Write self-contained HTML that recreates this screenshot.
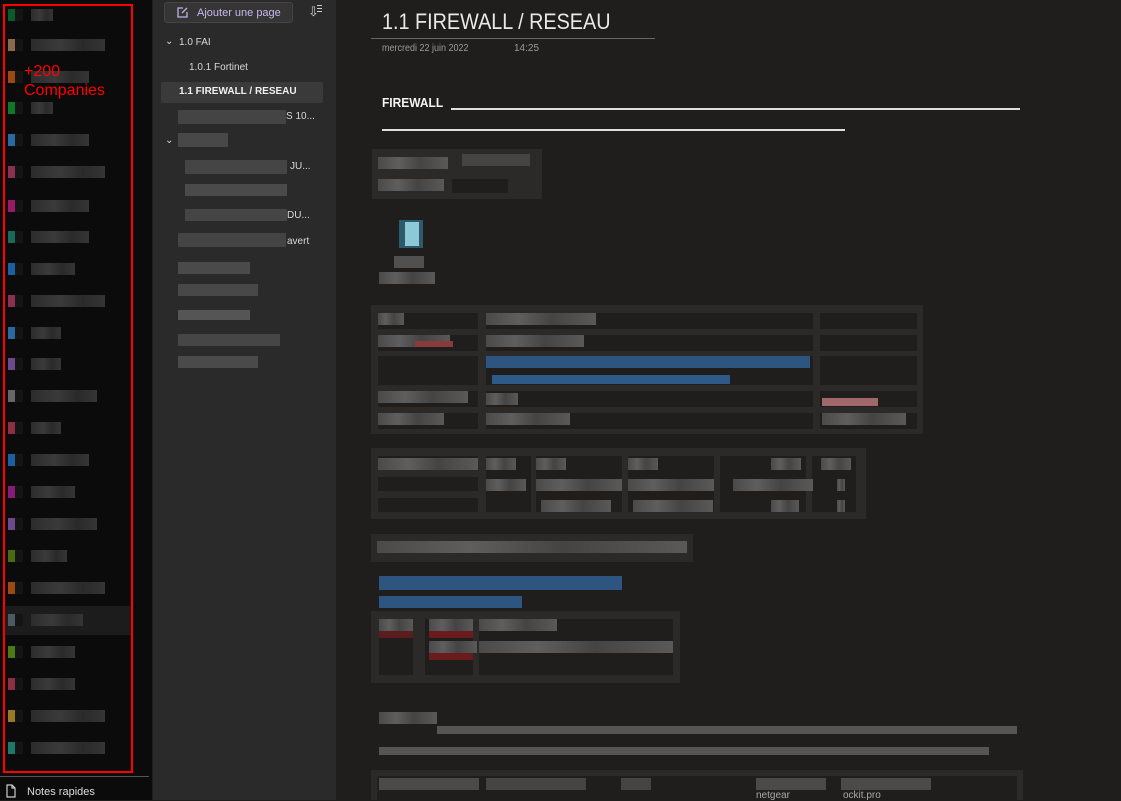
<!DOCTYPE html>
<html><head><meta charset="utf-8"><style>
*{margin:0;padding:0;box-sizing:border-box}
body{width:1121px;height:800px;overflow:hidden;background:#1f1e1d;font-family:"Liberation Sans",sans-serif;position:relative}
.a{position:absolute}
#left{left:0;top:0;width:152px;height:800px;background:#0b0b0b}
#mid{left:153px;top:0;width:183px;height:800px;background:#2a2a2a}
.sq{position:absolute;left:8px;width:7px;height:12px}
.sq2{position:absolute;left:15px;width:8px;height:12px;background:#141414}
.tb{position:absolute;left:31px;height:12px;background:linear-gradient(90deg,#2c2c2c,#3a3a3a 40%,#2a2a2a 70%,#353535)}
.g{position:absolute;background:#4a4a4a}
.mt{position:absolute;color:#d8d8d8;font-size:11px}
.tbl{position:absolute;background:#2b2a29}
.c{position:absolute;background:#1f1e1d}
.t{position:absolute;height:12px;background:linear-gradient(90deg,#4a4a4a,#5e5e5e 30%,#444 60%,#595959)}
</style></head><body>
<div id="left" class="a">
<div class="a" style="left:2px;top:606px;width:130px;height:29px;background:#1c1c1c"></div>
<div id="items"></div>
<div class="a" style="left:3px;top:4px;width:130px;height:769px;border:2px solid #f00"></div>
<div class="a" style="left:24px;top:62px;color:#f00;font-size:16px;line-height:19px">+200<br>Companies</div>
<div class="a" style="left:0;top:776px;width:149px;height:1px;background:#555"></div>
<svg class="a" style="left:4px;top:784px" width="14" height="14" viewBox="0 0 14 14"><path d="M3 1h5l3 3v9H3z M8 1v3h3" fill="none" stroke="#ccc" stroke-width="1.2"/></svg>
<div class="a" style="left:27px;top:786px;color:#ddd;font-size:11px">Notes rapides</div>
</div>
<div id="mid" class="a">
<div class="a" style="left:11px;top:2px;width:129px;height:21px;background:#353535;border:1px solid #444;border-radius:3px"></div>
<svg class="a" style="left:23px;top:6px" width="13" height="13" viewBox="0 0 13 13"><path d="M11 6v5H2V2h5 M6 7l5-5" fill="none" stroke="#c2b0e8" stroke-width="1.3"/></svg>
<div class="a" style="left:44px;top:7px;color:#c8b8ec;font-size:11px">Ajouter une page</div>
<div class="a" style="left:155px;top:4px;color:#ccc;font-size:13px">⇩</div>
<div class="a" style="left:164px;top:5px;width:5px;height:1px;background:#ccc;box-shadow:0 3px 0 #ccc,0 6px 0 #ccc"></div>
<div class="mt" style="left:12px;top:36px;font-size:10px">⌄</div>
<div class="mt" style="left:26px;top:37px;font-size:10px">1.0 FAI</div>
<div class="mt" style="left:36px;top:62px;font-size:10px">1.0.1 Fortinet</div>
<div class="a" style="left:8px;top:82px;width:162px;height:21px;background:#3a3a3a;border-radius:2px"></div>
<div class="mt" style="left:26px;top:86px;font-size:10px;font-weight:bold;color:#f0f0f0">1.1 FIREWALL / RESEAU</div>
<div class="g" style="left:25px;top:110px;width:108px;height:14px;background:#444"></div><div class="mt" style="left:133px;top:111px;font-size:10px">S 10...</div>
<div class="mt" style="left:12px;top:135px;font-size:10px">⌄</div>
<div class="g" style="left:25px;top:133px;width:50px;height:14px;background:#484848"></div>
<div class="g" style="left:32px;top:160px;width:102px;height:14px;background:#454545"></div><div class="mt" style="left:137px;top:161px;font-size:10px">JU...</div>
<div class="g" style="left:32px;top:184px;width:102px;height:12px;background:#4a4a4a"></div>
<div class="g" style="left:32px;top:209px;width:102px;height:12px;background:#454545"></div><div class="mt" style="left:134px;top:210px;font-size:10px">DU...</div>
<div class="g" style="left:25px;top:233px;width:108px;height:14px;background:#444"></div><div class="mt" style="left:134px;top:236px;font-size:10px">avert</div>
<div class="g" style="left:25px;top:262px;width:72px;height:12px;background:#4a4a4a"></div>
<div class="g" style="left:25px;top:284px;width:80px;height:12px;background:#484848"></div>
<div class="g" style="left:25px;top:310px;width:72px;height:10px;background:#555"></div>
<div class="g" style="left:25px;top:334px;width:102px;height:12px;background:#464646"></div>
<div class="g" style="left:25px;top:356px;width:80px;height:12px;background:#4a4a4a"></div>
</div>
<!-- main -->
<div class="a" style="left:382px;top:9px;color:#e8e8e8;font-size:22px;transform:scaleX(0.9);transform-origin:0 0">1.1 FIREWALL / RESEAU</div>
<div class="a" style="left:371px;top:38px;width:284px;height:1px;background:#666"></div>
<div class="a" style="left:382px;top:43px;color:#999;font-size:10px;transform:scaleX(0.9);transform-origin:0 0">mercredi 22 juin 2022</div>
<div class="a" style="left:514px;top:43px;color:#999;font-size:10px">14:25</div>
<div class="a" style="left:382px;top:95px;color:#f4f4f4;font-size:13px;font-weight:bold;transform:scaleX(0.92);transform-origin:0 0">FIREWALL</div>
<div class="a" style="left:451px;top:108px;width:569px;height:2px;background:#ddd"></div>
<div class="a" style="left:382px;top:129px;width:463px;height:2px;background:#ddd"></div>
<div class="tbl" style="left:372px;top:149px;width:170px;height:50px"><div class="c" style="left:80px;top:30px;width:56px;height:14px"></div><div class="t" style="left:6px;top:8px;width:70px"></div><div class="t" style="left:90px;top:5px;width:68px;background:#444"></div><div class="t" style="left:6px;top:30px;width:66px"></div></div>
<div class="a" style="left:399px;top:220px;width:24px;height:28px;background:#2d5a6a"></div><div class="a" style="left:405px;top:222px;width:14px;height:24px;background:#8cc8d8"></div>
<div class="t" style="left:394px;top:256px;width:30px;background:#505050"></div>
<div class="t" style="left:379px;top:272px;width:56px"></div>
<!-- table 1 -->
<div class="tbl" style="left:371px;top:305px;width:552px;height:129px">
<div class="c" style="left:7px;top:8px;width:100px;height:16px"></div><div class="c" style="left:115px;top:8px;width:327px;height:16px"></div><div class="c" style="left:449px;top:8px;width:97px;height:16px"></div>
<div class="c" style="left:7px;top:30px;width:100px;height:16px"></div><div class="c" style="left:115px;top:30px;width:327px;height:16px"></div><div class="c" style="left:449px;top:30px;width:97px;height:16px"></div>
<div class="c" style="left:7px;top:51px;width:100px;height:29px"></div><div class="c" style="left:115px;top:51px;width:327px;height:29px"></div><div class="c" style="left:449px;top:51px;width:97px;height:29px"></div>
<div class="c" style="left:7px;top:86px;width:100px;height:16px"></div><div class="c" style="left:115px;top:86px;width:327px;height:16px"></div><div class="c" style="left:449px;top:86px;width:97px;height:16px"></div>
<div class="c" style="left:7px;top:108px;width:100px;height:16px"></div><div class="c" style="left:115px;top:108px;width:327px;height:16px"></div><div class="c" style="left:449px;top:108px;width:97px;height:16px"></div>
<div class="t" style="left:7px;top:8px;width:26px"></div><div class="t" style="left:115px;top:8px;width:110px"></div>
<div class="t" style="left:7px;top:30px;width:72px"></div><div class="a" style="left:44px;top:36px;width:38px;height:6px;background:#8a3a3a"></div><div class="t" style="left:115px;top:30px;width:98px"></div>
<div class="a" style="left:115px;top:51px;width:324px;height:12px;background:#2e5580"></div><div class="a" style="left:121px;top:70px;width:238px;height:9px;background:#2e5a8a"></div>
<div class="t" style="left:7px;top:86px;width:90px"></div><div class="t" style="left:115px;top:88px;width:32px"></div><div class="a" style="left:451px;top:93px;width:56px;height:8px;background:#a06868"></div>
<div class="t" style="left:7px;top:108px;width:66px"></div><div class="t" style="left:115px;top:108px;width:84px"></div><div class="t" style="left:451px;top:108px;width:84px"></div>
</div>
<!-- table 2 -->
<div class="tbl" style="left:371px;top:448px;width:495px;height:71px">
<div class="c" style="left:7px;top:8px;width:100px;height:14px"></div><div class="c" style="left:7px;top:29px;width:100px;height:14px"></div><div class="c" style="left:7px;top:50px;width:100px;height:14px"></div>
<div class="c" style="left:115px;top:8px;width:45px;height:56px"></div><div class="c" style="left:165px;top:8px;width:86px;height:56px"></div><div class="c" style="left:257px;top:8px;width:86px;height:56px"></div><div class="c" style="left:349px;top:8px;width:86px;height:56px"></div><div class="c" style="left:441px;top:8px;width:44px;height:56px"></div>
<div class="t" style="left:7px;top:10px;width:100px"></div><div class="t" style="left:115px;top:10px;width:30px"></div><div class="t" style="left:165px;top:10px;width:30px"></div><div class="t" style="left:257px;top:10px;width:30px"></div><div class="t" style="left:400px;top:10px;width:30px"></div><div class="t" style="left:450px;top:10px;width:30px"></div>
<div class="t" style="left:115px;top:31px;width:40px"></div><div class="t" style="left:165px;top:31px;width:86px"></div><div class="t" style="left:257px;top:31px;width:86px"></div><div class="t" style="left:362px;top:31px;width:80px"></div><div class="t" style="left:466px;top:31px;width:8px"></div>
<div class="t" style="left:170px;top:52px;width:70px"></div><div class="t" style="left:262px;top:52px;width:80px"></div><div class="t" style="left:400px;top:52px;width:28px"></div><div class="t" style="left:466px;top:52px;width:8px"></div>
</div>
<div class="tbl" style="left:371px;top:534px;width:322px;height:28px"><div class="t" style="left:6px;top:7px;width:310px"></div></div>
<div class="a" style="left:379px;top:576px;width:243px;height:14px;background:#2e5580"></div>
<div class="a" style="left:379px;top:596px;width:143px;height:12px;background:#2e5580"></div>
<!-- table 3 -->
<div class="tbl" style="left:371px;top:611px;width:309px;height:72px">
<div class="c" style="left:8px;top:8px;width:34px;height:56px"></div><div class="c" style="left:54px;top:8px;width:48px;height:56px"></div><div class="c" style="left:108px;top:8px;width:194px;height:56px"></div>
<div class="t" style="left:8px;top:8px;width:34px"></div><div class="a" style="left:8px;top:20px;width:34px;height:7px;background:#5a1c1c"></div><div class="t" style="left:58px;top:8px;width:44px"></div><div class="a" style="left:58px;top:20px;width:44px;height:7px;background:#6a1c1c"></div><div class="t" style="left:108px;top:8px;width:78px"></div>
<div class="t" style="left:58px;top:30px;width:48px"></div><div class="a" style="left:58px;top:42px;width:44px;height:7px;background:#6a1c1c"></div><div class="t" style="left:108px;top:30px;width:194px"></div>
</div>
<div class="t" style="left:379px;top:712px;width:58px"></div>
<div class="a" style="left:437px;top:726px;width:580px;height:8px;background:#555"></div>
<div class="a" style="left:379px;top:747px;width:610px;height:8px;background:#555"></div>
<div class="tbl" style="left:371px;top:770px;width:652px;height:30px">
<div class="c" style="left:6px;top:6px;width:640px;height:24px"></div>
<div class="t" style="left:8px;top:8px;width:100px;background:#4a4a4a"></div><div class="t" style="left:115px;top:8px;width:100px;background:#444"></div><div class="t" style="left:250px;top:8px;width:30px;background:#444"></div><div class="t" style="left:385px;top:8px;width:70px;background:#4a4a4a"></div><div class="t" style="left:470px;top:8px;width:90px;background:#4a4a4a"></div>
<div class="mt" style="left:385px;top:20px;font-size:10px;color:#aaa">netgear</div><div class="mt" style="left:472px;top:20px;font-size:10px;color:#aaa">ockit.pro</div>
</div>
<script>
var ys=[15,45,77,108,140,172,206,237,269,301,333,364,396,428,460,492,524,556,588,620,652,684,716,748];
var cs=["#0a5a2a","#8a6a4a","#9a4a10","#0a7a2a","#2a6aa0","#8a3050","#9a1a6a","#1a6a5a","#1a60a0","#8a3050","#2a6aa0","#6a4a8a","#666","#8a3040","#1a60a0","#8a1a7a","#6a4a8a","#4a6a10","#9a4a10","#4a5a60","#4a7a10","#8a3040","#9a7a20","#1a7a6a"];
var ws=[22,74,58,22,58,74,58,58,44,74,30,30,66,30,58,44,66,36,74,52,44,44,74,74];
var h="";for(var i=0;i<ys.length;i++){h+='<div class="sq" style="top:'+(ys[i]-6)+'px;background:'+cs[i]+'"></div><div class="sq2" style="top:'+(ys[i]-6)+'px"></div><div class="tb" style="top:'+(ys[i]-6)+'px;width:'+ws[i]+'px"></div>';}
document.getElementById("items").innerHTML=h;
</script>
</body></html>
